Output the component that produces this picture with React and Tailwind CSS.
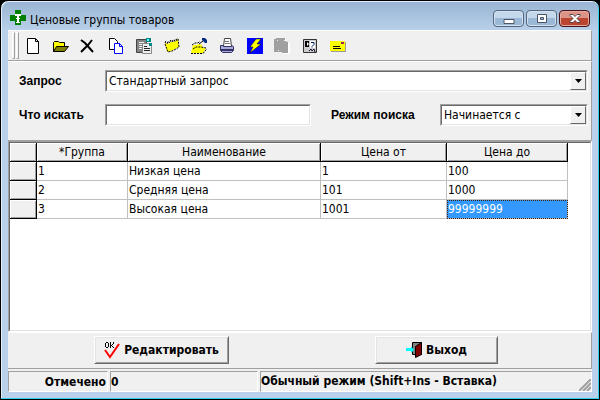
const tahoma = "font-['DejaVu_Sans_Condensed','DejaVu_Sans',sans-serif]";
const sunken = "border border-t-[#a0a0a0] border-l-[#a0a0a0] border-r-white border-b-white";
const sunkenInner = "border border-t-[#696969] border-l-[#696969] border-r-[#e3e3e3] border-b-[#e3e3e3]";
const label = "font-['Liberation_Sans',sans-serif] text-xs font-bold";

const toolIcons = [
  ["Новый", <path d="M2.5.5h8l3 3v12h-11zM10.500.5v3h3" fill="#fff" stroke="#000" />],
  ["Открыть", <><path d="M.5 13.500v-9l1-1h4l1 1h5v4" fill="#ff0" stroke="#000" /><path d="M.5 13.500l3-5h12l-4 5z" fill="#808000" stroke="#000" /></>],
  ["Удалить", <path d="M1 2l4 3 8 9M12 2L8 7l-7 7" fill="none" stroke="#000" strokeWidth="2" />],
  ["Копировать", <><path d="M1.500.5h5l3 3v8h-8z" fill="#fff" stroke="#000" /><path d="M6.500 5.500h5l3 3v7h-8zM11.500 5.500v3h3" fill="#fff" stroke="#00f" /></>],
  ["Вставить", <><path d="M.5 1.500h10v13H.5z" fill="#848484" stroke="#444" /><path d="M3 4.500h5M3 6.500h3M3 8.500h3M3 10.500h3" stroke="#eee" /><path d="M10 0h5v4h-5z" fill="#088" /><path d="M11 1h2v2h-2z" fill="#6ff" /><path d="M6.500 5.500h6l3 3v7h-9z" fill="#eee" stroke="#888" /><path d="M8 8.500h3M8 10.500h6M8 12.500h6" stroke="#222" /><path d="M13 5h3v3h-3z" fill="#088" /></>],
  ["Карточка", <><path d="M1 5l3 1 3-2 3 0 4-3 1 8-4 2-4 2-4 1z" fill="#ff0" /><path d="M1 4l3 1 3-2 3 0 4-2" fill="none" stroke="#000" strokeWidth="2" strokeDasharray="1 1" /><path d="M1 6l3 8 4-1 4-2 3-2-1-8" fill="none" stroke="#000" strokeDasharray="2 1" /></>],
  ["Закрепить", <><path d="M0 15l2-8h3l3-1 3 1 1 3h3l-3 5z" fill="#ff0" /><path d="M1 7l3-2h3l2-2M0 15.500h12l4-5M2 11l3-2h5l5 1" fill="none" stroke="#000" strokeDasharray="2 1" /><path d="M8 6l4-3" stroke="#000" /><path d="M11 0h3l2 2v3h-2l-3-3z" fill="#002a80" /></>],
  ["Печать", <><path d="M5.500.5h6l1 8h-8z" fill="#fff" stroke="#444" /><path d="M6 3.500h4M6 5.500h5" stroke="#777" /><path d="M1.500 7.500h3v1h8v-1l2 1v4l-2 2h-9l-2-2z" fill="#a9a9dc" stroke="#333366" /><path d="M2 11h12v2H2z" fill="#336" /></>],
  ["Выполнить", <><path d="M0 0h16v16H0z" fill="#00f" /><path d="M9 1h5l-4 5h4L3 15l3-6H3z" fill="#ff0" stroke="#000" strokeWidth=".5" /></>],
  ["Сохранить", <><path d="M1 2h2V1h9v3l4 1v11H9v-2H1z" fill="#fff" /><path d="M0 1h2V0h9v3l3 1v11H8v-1H0z" fill="#a0a0a0" /><path d="M3 2.500h1M10 2.500h1M4 12.500h1" stroke="#eee" /></>],
  ["Справка", <><path d="M1.500 1.500h13v13h-13z" fill="#ccc" stroke="#333" /><path d="M3 3h4v6H3z" fill="#000" /><path d="M8 3h5v7H8z" fill="#fff" /><path d="M5 4l2 2-2 2z" fill="#fff" /><path d="M9 4.500h3v2l-2 2v1" fill="none" stroke="#001a66" /><path d="M7 13l2-2 1 2 2-2 1 3" fill="none" stroke="#113" /></>],
  ["Почта", <><path d="M1 4h15v10H1z" fill="#999" /><path d="M0 3h15v10H0z" fill="#ff0" /><path d="M3 8.500h7M3 10.500h8" stroke="#000" /><path d="M11 4h3v2h-3z" fill="#a0205a" /></>],
];

const columns = ["*Группа", "Наименование", "Цена от", "Цена до"];
const rows = [
  ["1", "Низкая цена", "1", "100"],
  ["2", "Средняя цена", "101", "1000"],
  ["3", "Высокая цена", "1001", "99999999"],
];

function TitleBar() {
  const caption = "flex h-[17px] w-[31px] items-center justify-center rounded-sm border border-[#536780] bg-linear-to-b from-[#c5d8eb] from-50% to-[#9bb9d7] to-50% shadow-[inset_0_0_0_1px_#d4e2f0]";
  return (
    <header className="flex h-7 items-start justify-between">
      <h1 className="flex items-center gap-1 pt-2.5 text-xs leading-4 whitespace-nowrap">
        <svg className="ml-0.5 -mt-1" width="16" height="16" viewBox="0 0 16 16" aria-hidden="true">
          <path d="M5 0h6v5h5v6h-5v4H5v-4H0V5h5z" fill="#008000" />
          <path d="M5 4h6v2H5zM7 4h2v9H7zM6 8h4v1H6zM6 12h4v1H6z" fill="#fff" />
        </svg>
        Ценовые группы товаров
      </h1>
      <div className="flex gap-0.5 pt-2 pr-0.5">
        <button className={caption} aria-label="Свернуть">
          <svg width="12" height="10" viewBox="0 0 12 10"><path d="M1 5.500h10v4H1z" fill="#fff" stroke="#4a5566" /></svg>
        </button>
        <button className={caption} aria-label="Развернуть">
          <svg width="12" height="10" viewBox="0 0 12 10"><path d="M1.500.5h9v8h-9z" fill="#fff" stroke="#4a5566" /><path d="M4.500 3.500h3v2h-3z" fill="#9bb9d7" stroke="#4a5566" /></svg>
        </button>
        <button className="flex h-[17px] w-[31px] items-center justify-center rounded-sm border border-[#4a1018] bg-linear-to-b from-[#dc9488] from-50% to-[#bc4530] to-50% shadow-[inset_0_0_0_1px_#e4aaa0]" aria-label="Закрыть">
          <svg width="12" height="10" viewBox="0 0 12 10"><path d="M1 .5h3l2 2 2-2h3v1L8 4.500l3 3v1H8l-2-2-2 2H1v-1l3-3-3-3z" fill="#fff" stroke="#51414a" /></svg>
        </button>
      </div>
    </header>
  );
}

function DropDown({ id, value, className }) {
  return (
    <div className={`${sunken} ${className}`}>
      <div className={`relative flex h-5 bg-white ${sunkenInner}`}>
        <select id={id} className="min-w-0 flex-1 appearance-none bg-white pr-5 pl-0.5 text-xs outline-none">
          <option>{value}</option>
        </select>
        <span className="pointer-events-none absolute inset-y-0 right-0 flex w-4 items-center justify-center border border-t-white border-l-white border-r-[#696969] border-b-[#696969] bg-[#f0f0f0]">
          <svg width="7" height="4" viewBox="0 0 7 4" aria-hidden="true"><path d="M0 0h7L3.500 4z" /></svg>
        </span>
      </div>
    </div>
  );
}

function SearchPanel() {
  return (
    <section className="flex flex-col gap-3 border-t border-r border-t-white border-r-[#a0a0a0] pt-2 pr-[3px] pb-[14px] pl-[11px]">
      <div className="flex items-center">
        <label htmlFor="query" className={`w-[86px] ${label}`}>Запрос</label>
        <DropDown id="query" value="Стандартный запрос" className="flex-1" />
      </div>
      <div className="flex items-center">
        <label htmlFor="search" className={`w-[86px] ${label}`}>Что искать</label>
        <div className={`flex-1 ${sunken}`}>
          <input id="search" type="text" className={`block h-5 w-full bg-white px-0.5 text-xs outline-none ${sunkenInner}`} />
        </div>
        <label htmlFor="mode" className={`w-[129px] pl-5 ${label}`}>Режим поиска</label>
        <DropDown id="mode" value="Начинается с" className="w-[148px]" />
      </div>
    </section>
  );
}

function PriceGrid() {
  const fixedCell = "border-r border-r-black bg-[#f0f0f0] p-0 shadow-[inset_1px_1px_#fff,inset_-1px_-1px_#a0a0a0]";
  return (
    <section className={`h-[192px] ${sunken} border-t-2`}>
      <div className={`h-full bg-white ${sunkenInner}`}>
        <table className="w-[558px] table-fixed border-separate border-spacing-0 text-xs">
          <colgroup>
            <col className="w-[27px]" />
            <col className="w-[91px]" />
            <col className="w-[193px]" />
            <col className="w-[126px]" />
            <col className="w-[121px]" />
          </colgroup>
          <thead>
            <tr className="h-[19px]">
              <td className={`${fixedCell} border-b`} />
              {columns.map((name) => (
                <th key={name} className={`${fixedCell} border-b border-b-black font-normal`}>{name}</th>
              ))}
            </tr>
          </thead>
          <tbody>
            {rows.map((row, r) => (
              <tr key={row[0]} className="h-[19px]">
                <td className={`${fixedCell} border-b border-b-black`} />
                {row.map((value, c) => (
                  <td
                    key={c}
                    className={
                      r === 2 && c === 3
                        ? "border-r border-b border-[#c0c0c0] bg-[#3399ff] p-0 pl-px text-white outline outline-dotted -outline-offset-1 outline-[#402000]"
                        : "border-r border-b border-[#c0c0c0] p-0 pl-px"
                    }
                  >
                    {value}
                  </td>
                ))}
              </tr>
            ))}
          </tbody>
        </table>
      </div>
    </section>
  );
}

function Actions() {
  const button = "flex h-7 items-center justify-center gap-1 border border-t-white border-l-white border-r-[#696969] border-b-[#696969] text-xs font-bold shadow-[inset_1px_1px_#e3e3e3,inset_-1px_-1px_#a0a0a0]";
  return (
    <section className="flex justify-between border-t border-r border-b border-t-white border-r-[#a0a0a0] border-b-[#a0a0a0] pt-[3px] pr-[93px] pb-1 pl-[86px]">
      <button className={`w-[135px] ${button}`}>
        <svg width="16" height="18" viewBox="0 0 16 18" aria-hidden="true">
          <path d="M2 1.500h2M2 6.500h2M1.500 2v4M4.500 2v4M6.500 1v6M9.500 1v2M7 4.500h1M8.500 3v1M8.500 5v1M9.500 6v1" fill="none" stroke="#000" />
          <path d="M1 9l5 7 9-13" fill="none" stroke="#f00" strokeWidth="2" />
        </svg>
        Редактировать
      </button>
      <button className={`w-[123px] ${button}`}>
        <svg width="16" height="16" viewBox="0 0 16 16" aria-hidden="true">
          <path d="M6.500.5h9v12h-9z" fill="#808080" stroke="#000" />
          <path d="M9.500 4.500l6-4v12l-6 3z" fill="#800000" stroke="#000" />
          <path d="M0 6h5V4l3 4-3 3V9H0z" fill="#0ff" />
        </svg>
        Выход
      </button>
    </section>
  );
}

function StatusBar() {
  const cell = "h-[21px] border border-t-[#a0a0a0] border-l-[#a0a0a0] border-r-white border-b-white leading-5";
  return (
    <footer className="flex gap-0.5 pt-0.5 text-xs font-bold whitespace-nowrap">
      <div className={`w-[100px] pr-px text-right ${cell}`}>Отмечено</div>
      <div className={`w-[148px] ${cell}`}>0</div>
      <div className={`flex flex-1 items-end justify-between ${cell}`}>
        Обычный режим (Shift+Ins - Вставка)
        <svg width="12" height="12" viewBox="0 0 12 12" aria-hidden="true">
          <path d="M0 12L12 0M4 12l8-8M8 12l4-4" stroke="#a0a0a0" strokeWidth="2" />
        </svg>
      </div>
    </footer>
  );
}

export default function App() {
  return (
    <div className={`bg-black text-black ${tahoma}`}>
      <main className="rounded-t-lg border border-black bg-linear-to-b from-[#98b4d2] to-[#b9d1ea] to-[30px] px-[7px] pt-px pb-[7px] shadow-[inset_-1px_-1px_#2fd0e8,inset_1px_1px_#e4eef8]">
        <TitleBar />
        <div className="bg-[#f0f0f0]">
          <nav className="flex h-[31px] items-center border-t border-r border-b border-t-white border-r-[#a0a0a0] border-b-[#a0a0a0] pl-1">
            <span className="mr-px h-[27px] w-[3px] border border-t-white border-l-white border-r-[#a0a0a0] border-b-[#a0a0a0]" />
            <span className="mr-[6px] h-[27px] w-[3px] border border-t-white border-l-white border-r-[#a0a0a0] border-b-[#a0a0a0]" />
            <div className="flex w-[321px] justify-between">
              {toolIcons.map(([name, drawing]) => (
                <button key={name} aria-label={name}>
                  <svg width="16" height="16" viewBox="0 0 16 16" aria-hidden="true">{drawing}</svg>
                </button>
              ))}
            </div>
          </nav>
          <SearchPanel />
          <PriceGrid />
          <Actions />
          <StatusBar />
        </div>
      </main>
    </div>
  );
}
